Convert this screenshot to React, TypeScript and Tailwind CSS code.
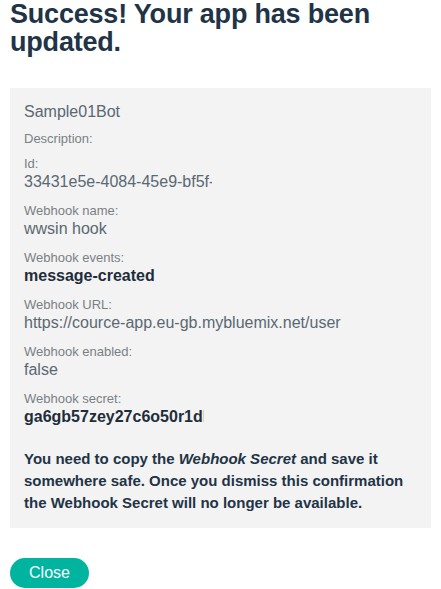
const fields: { label: string; value: string; bold?: boolean; clip?: string }[] = [
  { label: "Id:", value: "33431e5e-4084-45e9-bf5f-2f1c0a9d7e61", clip: "w-[188px]" },
  { label: "Webhook name:", value: "wwsin hook" },
  { label: "Webhook events:", value: "message-created", bold: true },
  { label: "Webhook URL:", value: "https://cource-app.eu-gb.mybluemix.net/user" },
  { label: "Webhook enabled:", value: "false" },
  { label: "Webhook secret:", value: "ga6gb57zey27c6o50r1dlk8m2p", bold: true, clip: "w-[180px]" },
];

export default function App() {
  return (
    <div className="min-h-screen bg-white px-[10px] font-['Liberation_Sans',Arial,sans-serif]">
      <h1 className="text-[27px] leading-[28px] font-bold tracking-[-0.2px] text-[#1f3446]">
        Success! Your app has been updated.
      </h1>

      {/* details panel */}
      <div className="mt-[32px] bg-[#f3f3f3] px-[14px] pt-[14px] pb-[14px]">
        <div className="text-[16px] leading-[19px] text-[#5a6872]">Sample01Bot</div>
        <div className="mt-[10px] text-[13px] leading-[16px] text-[#7a7f84]">Description:</div>

        <div className="mt-[9px] flex flex-col gap-[12px]">
          {fields.map((f) => (
            <div key={f.label}>
              <div className="text-[13px] leading-[16px] text-[#7a7f84]">{f.label}</div>
              <div
                className={`text-[16px] leading-[19px] whitespace-nowrap ${
                  f.bold ? "font-bold text-[#1f2d3a]" : "text-[#5a6872]"
                } ${f.clip ? "overflow-hidden " + f.clip : ""}`}
              >
                {f.value}
              </div>
            </div>
          ))}
        </div>

        <p className="mt-[22px] text-[15px] leading-[22px] font-bold text-[#1f3446]">
          You need to copy the <em>Webhook Secret</em> and save it somewhere safe. Once you dismiss
          this confirmation the Webhook Secret will no longer be available.
        </p>
      </div>

      <button className="mt-[30px] h-[30px] w-[79px] rounded-full bg-[#00b4a0] text-[16px] text-white">
        Close
      </button>
    </div>
  );
}
